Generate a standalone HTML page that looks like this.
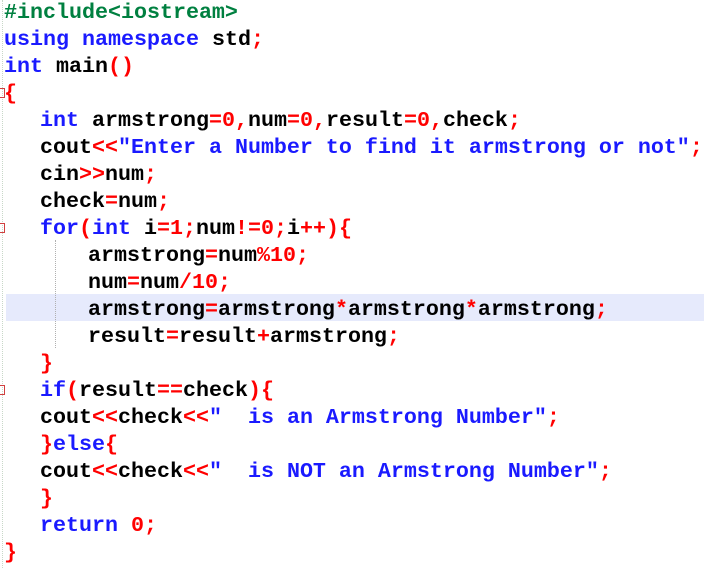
<!DOCTYPE html>
<html><head><meta charset="utf-8"><style>
body{margin:0;width:704px;height:568px;background:#fff;overflow:hidden;position:relative;font-family:"Liberation Mono","Courier New",monospace;font-weight:bold;font-size:21.67px;}
.l{position:absolute;left:0;width:704px;height:27px;line-height:31px;white-space:pre;color:#000;}
.k{color:#1a1aff}.s{color:#1a1aff}.r{color:#ff0000}.g{color:#008040}
.hl{background:#e6eafc}
.gut{position:absolute;left:2px;top:0;height:568px;border-left:1px dotted #c8d8c8;}
.guide{position:absolute;left:55px;top:240px;height:108px;border-left:1px dotted #b0b0b0;}
.fold{position:absolute;left:0;width:4px;height:8px;border:1px solid #d04040;border-left:none;}
</style></head><body>
<div class="gut"></div>
<div class="l" style="top:-3px;left:4px" ><span class="g">#include&lt;iostream&gt;</span></div>
<div class="l" style="top:24px;left:4px"><span class="k">using namespace</span> std<span class="r">;</span></div>
<div class="l" style="top:51px;left:4px"><span class="k">int</span> main<span class="r">()</span></div>
<div class="l" style="top:78px;left:4px"><span class="r">{</span></div>
<div class="l" style="top:105px;left:40px"><span class="k">int</span> armstrong<span class="r">=0,</span>num<span class="r">=0,</span>result<span class="r">=0,</span>check<span class="r">;</span></div>
<div class="l" style="top:132px;left:40px">cout<span class="r">&lt;&lt;</span><span class="s">"Enter a Number to find it armstrong or not"</span><span class="r">;</span></div>
<div class="l" style="top:159px;left:40px">cin<span class="r">&gt;&gt;</span>num<span class="r">;</span></div>
<div class="l" style="top:186px;left:40px">check<span class="r">=</span>num<span class="r">;</span></div>
<div class="l" style="top:213px;left:40px"><span class="k">for</span><span class="r">(</span><span class="k">int</span> i<span class="r">=1;</span>num<span class="r">!=0;</span>i<span class="r">++){</span></div>
<div class="l" style="top:240px;left:88px">armstrong<span class="r">=</span>num<span class="r">%10;</span></div>
<div class="l" style="top:267px;left:88px">num<span class="r">=</span>num<span class="r">/10;</span></div>
<div class="l hl" style="top:294px;left:6px;padding-left:82px;width:616px">armstrong<span class="r">=</span>armstrong<span class="r">*</span>armstrong<span class="r">*</span>armstrong<span class="r">;</span></div>
<div class="l" style="top:321px;left:88px">result<span class="r">=</span>result<span class="r">+</span>armstrong<span class="r">;</span></div>
<div class="l" style="top:348px;left:40px"><span class="r">}</span></div>
<div class="l" style="top:375px;left:40px"><span class="k">if</span><span class="r">(</span>result<span class="r">==</span>check<span class="r">){</span></div>
<div class="l" style="top:402px;left:40px">cout<span class="r">&lt;&lt;</span>check<span class="r">&lt;&lt;</span><span class="s">"  is an Armstrong Number"</span><span class="r">;</span></div>
<div class="l" style="top:429px;left:40px"><span class="r">}</span><span class="k">else</span><span class="r">{</span></div>
<div class="l" style="top:456px;left:40px">cout<span class="r">&lt;&lt;</span>check<span class="r">&lt;&lt;</span><span class="s">"  is NOT an Armstrong Number"</span><span class="r">;</span></div>
<div class="l" style="top:483px;left:40px"><span class="r">}</span></div>
<div class="l" style="top:510px;left:40px"><span class="k">return</span> <span class="r">0;</span></div>
<div class="l" style="top:537px;left:4px"><span class="r">}</span></div>
<div class="guide"></div>
<div class="fold" style="top:88px"></div>
<div class="fold" style="top:223px"></div>
<div class="fold" style="top:385px"></div>
</body></html>
